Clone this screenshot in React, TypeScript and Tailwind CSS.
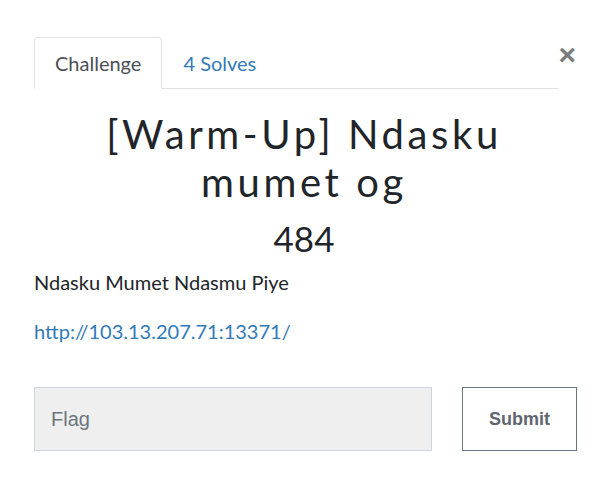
import React, { useState } from "react";

const App: React.FC = () => {
  const [flag, setFlag] = useState("");
  const [tab, setTab] = useState("challenge");

  return (
    <div className="relative w-[608px] h-[482px] bg-white px-[34px] font-['Lato','Liberation_Sans',sans-serif] text-[#212529]">
      {/* Close */}
      <button className="absolute right-[32px] top-[40px] text-[30px] leading-none font-bold text-[#7b7b7b] font-['Liberation_Sans',sans-serif]">
        ×
      </button>

      {/* Tabs */}
      <div className="pt-[37px] mr-[16px]">
        <ul className="flex border-b border-[#dee2e6]">
          <li
            onClick={() => setTab("challenge")}
            className={
              "-mb-px h-[52px] px-[20px] flex items-center text-[20px] cursor-pointer rounded-t-[4px] border " +
              (tab === "challenge"
                ? "border-[#dee2e6] border-b-white bg-white text-[#495057]"
                : "border-transparent text-[#337ab7]")
            }
          >
            Challenge
          </li>
          <li
            onClick={() => setTab("solves")}
            className={
              "-mb-px h-[52px] px-[20px] flex items-center text-[20px] cursor-pointer rounded-t-[4px] border " +
              (tab === "solves"
                ? "border-[#dee2e6] border-b-white bg-white text-[#495057]"
                : "border-transparent text-[#337ab7]")
            }
          >
            4 Solves
          </li>
        </ul>
      </div>

      {/* Title */}
      <h2 className="mt-[21px] text-center text-[40px] leading-[48px] tracking-[3.6px] font-normal">
        [Warm-Up] Ndasku
        <br />
        mumet og
      </h2>
      <h3 className="mt-[11px] text-center text-[35px] leading-[42px] font-normal">
        484
      </h3>

      {/* Description */}
      <p className="mt-[8px] text-[20px] leading-[30px]">Ndasku Mumet Ndasmu Piye</p>
      <a href="#" className="block mt-[19px] text-[20px] leading-[30px] text-[#337ab7]">
        http://103.13.207.71:13371/
      </a>

      {/* Flag form */}
      <div className="mt-[41px] flex gap-[30px]">
        <input
          value={flag}
          onChange={(e) => setFlag(e.target.value)}
          placeholder="Flag"
          className="shrink-0 w-[398px] h-[64px] px-[16px] bg-[#efefef] border border-[#ced4da] text-[20px] font-['Liberation_Sans',sans-serif] placeholder:text-[#6c757d] outline-none"
        />
        <button className="shrink-0 w-[115px] h-[64px] border border-[#6c757d] bg-white text-[#5f6670] text-[18px] font-bold font-['Liberation_Sans',sans-serif]">
          Submit
        </button>
      </div>
    </div>
  );
};

export default App;
